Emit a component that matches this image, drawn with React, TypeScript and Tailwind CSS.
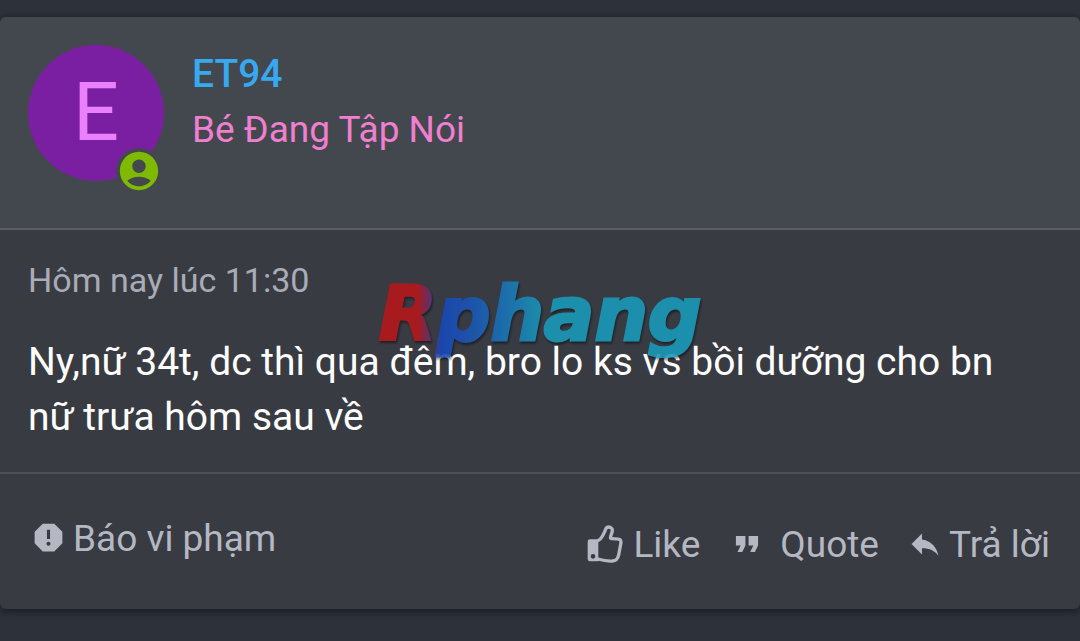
import type { ReactNode } from "react";
import { MdAccountCircle, MdFormatQuote, MdReply, MdReport } from "react-icons/md";

const App = () => {
  return (
    <main className="min-h-screen bg-[#2c313a] py-[17px] font-['Roboto',sans-serif]">
      <article className="relative rounded-md bg-[#393b43] shadow-[0_2px_8px_rgba(0,0,0,0.5)]">
        <UserHeader />
        <PostBody />
        <PostFooter />
      </article>
    </main>
  );
};

export default App;

const UserHeader = () => {
  return (
    <header className="flex gap-7 rounded-t-md border-b-2 border-[#5a5d64] bg-[#43484e] px-7 pt-7 pb-[47px]">
      <div className="relative flex size-[136px] items-center justify-center rounded-full bg-[#7b1fa2] pb-0.5">
        <span className="text-[81px] leading-none text-[#ea80fc]">E</span>
        <MdAccountCircle
          size={46}
          className="absolute right-0.5 -bottom-[13px] rounded-full bg-[#43484e] text-[#7fb900]"
        />
      </div>
      <div className="flex flex-col pt-px">
        <a href="#et94" className="text-[39px] leading-[56px] font-medium text-[#37a9ef]">
          ET94
        </a>
        <span className="text-[37px] leading-[56px] text-[#f07fcf]">Bé Đang Tập Nói</span>
      </div>
    </header>
  );
};

const PostBody = () => {
  return (
    <div className="relative pt-[23px] pr-10 pb-[27px] pl-7">
      <time className="block text-[34px] leading-[55px] text-[#a9acb6]">Hôm nay lúc 11:30</time>
      <p className="mt-[27px] text-[39px] leading-[55px] text-white">
        Ny,nữ 34t, dc thì qua đêm, bro lo ks vs bồi dưỡng cho bn nữ trưa hôm sau về
      </p>
      <Watermark />
    </div>
  );
};

const Watermark = () => {
  return (
    <svg
      viewBox="0 0 340 100"
      className="pointer-events-none absolute top-[40px] left-1/2 h-[100px] w-[340px] -translate-x-1/2 opacity-90 drop-shadow-[1px_2px_1px_rgba(0,0,0,0.5)]"
    >
      <defs>
        <linearGradient id="watermark" gradientUnits="userSpaceOnUse" x1="10" y1="0" x2="330" y2="0">
          <stop offset="0" stopColor="#b3181c" />
          <stop offset="0.12" stopColor="#b3181c" />
          <stop offset="0.19" stopColor="#1748b8" />
          <stop offset="0.28" stopColor="#1a55b5" />
          <stop offset="0.52" stopColor="#1899b7" />
          <stop offset="1" stopColor="#1899b7" />
        </linearGradient>
      </defs>
      <text
        x="9"
        y="70"
        fill="url(#watermark)"
        stroke="url(#watermark)"
        strokeWidth="3"
        className="font-['DejaVu_Sans',sans-serif] text-[75px] font-bold italic"
      >
        Rphang
      </text>
    </svg>
  );
};

const PostFooter = () => {
  return (
    <footer className="flex items-start justify-between border-t-2 border-[#4d5056] px-[30px] pb-[37px] text-[#b4b8c2]">
      <Action className="mt-[37px] gap-1.5" icon={<MdReport size={37} />}>
        Báo vi phạm
      </Action>
      <div className="mt-[43px] flex gap-7">
        <Action className="gap-2.5" icon={<ThumbsUp />}>
          Like
        </Action>
        <Action className="gap-3.5" icon={<MdFormatQuote size={38} />}>
          Quote
        </Action>
        <Action className="gap-1.5" icon={<MdReply size={36} />}>
          Trả lời
        </Action>
      </div>
    </footer>
  );
};

type ActionProps = {
  icon: ReactNode;
  className: string;
  children: ReactNode;
};

const Action = ({ icon, className, children }: ActionProps) => {
  return (
    <button type="button" className={`flex items-center text-[37px] leading-[55px] ${className}`}>
      <span className="pb-0.5">{icon}</span>
      <span>{children}</span>
    </button>
  );
};

const ThumbsUp = () => {
  return (
    <svg width="36" height="38" viewBox="0 0 108 114" fill="none">
      <path
        fill="currentColor"
        fillRule="evenodd"
        d="M9 43h25v66H9q-7 0-7-7V50q0-7 7-7Zm9 44a7 7 0 1 0 0 14 7 7 0 0 0 0-14Z"
      />
      <path
        stroke="currentColor"
        strokeWidth="10"
        strokeLinejoin="round"
        d="M32 47C42 45 47 33 53 20C57 9 58 6 64 6C72 6 77 11 76 18C75 26 69 33 71 40C80 44 95 38 100 45C104 50 101 57 100 63L95 90C92 102 88 107 76 108C58 109 46 106 32 102"
      />
    </svg>
  );
};
